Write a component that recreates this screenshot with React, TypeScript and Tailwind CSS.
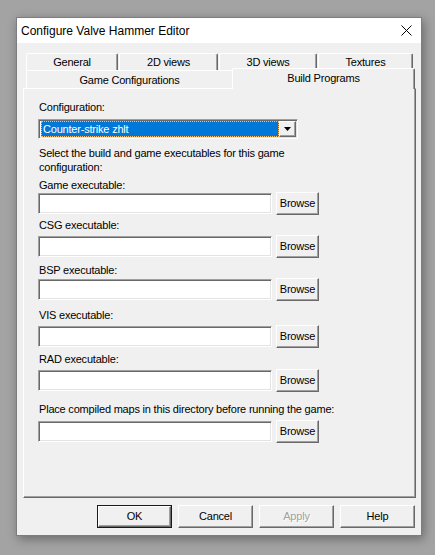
import React from "react";

const FONT = { fontFamily: '"Liberation Sans", Arial, sans-serif' };

function Raised({ children, className = "" }: { children?: React.ReactNode; className?: string }) {
  return (
    <div
      className={
        "flex items-center justify-center bg-[#f0f0f0] border border-t-white border-l-white border-r-[#696969] border-b-[#696969] shadow-[inset_-1px_-1px_0_#a0a0a0] " +
        className
      }
    >
      {children}
    </div>
  );
}

function Field({ label, labelMt, rowMt }: { label: string; labelMt: string; rowMt: string }) {
  return (
    <>
      <div className={"h-[14px] leading-[14px] ml-px " + labelMt}>{label}</div>
      <div className={"flex items-center h-[23px] " + rowMt}>
        <div className="w-[234px] h-[21px] bg-white border border-t-[#a0a0a0] border-l-[#a0a0a0] border-r-white border-b-white shadow-[inset_1px_1px_0_#696969,inset_-1px_-1px_0_#e3e3e3]" />
        <Raised className="ml-[4px] w-[43px] h-[23px]">Browse</Raised>
      </div>
    </>
  );
}

function BackTab({ label, w }: { label: string; w: string }) {
  return (
    <div
      className={
        "h-[17px] flex items-start justify-center pt-[1px] leading-[14px] bg-[#f0f0f0] border-t border-l border-r border-t-white border-l-white border-r-[#696969] shadow-[inset_-1px_0_0_#a0a0a0] rounded-tl-[2px] rounded-tr-[2px] " +
        w
      }
    >
      {label}
    </div>
  );
}

export default function App() {
  return (
    <div className="w-[435px] h-[555px] bg-[#a3a3a3] pt-[17px] pl-[16px] overflow-hidden" style={FONT}>
      <div className="w-[406px] h-[519px] border border-[#7d7d7d] bg-[#f0f0f0] flex flex-col shadow-[2px_3px_10px_rgba(0,0,0,0.35)]">
        {/* Title bar */}
        <div className="h-[25px] bg-white flex items-center pl-[4px] pr-[9px] shrink-0">
          <span className="text-[12px] text-black">Configure Valve Hammer Editor</span>
          <svg className="ml-auto" width="11" height="11" viewBox="0 0 11 11">
            <path d="M0.5 0.5 L10.5 10.5 M10.5 0.5 L0.5 10.5" stroke="#000" strokeWidth="1" />
          </svg>
        </div>
        {/* Body */}
        <div className="flex-1 pt-[10px] pl-[6px] pr-[5px] text-[11px] tracking-[-0.2px] text-black">
          {/* Tabs */}
          <div className="pl-[3px]">
            <div className="flex gap-[1px] h-[17px]">
              <BackTab label="General" w="w-[92px]" />
              <BackTab label="2D views" w="w-[99px]" />
              <BackTab label="3D views" w="w-[98px]" />
              <BackTab label="Textures" w="w-[95px]" />
            </div>
            <div className="flex items-start h-[20px] mt-[-2px]">
              <div className="mt-[2px] w-[206px] h-[18px] flex items-start justify-center pt-[2px] leading-[14px] bg-[#f0f0f0] border-t border-l border-t-white border-l-white rounded-tl-[2px]">
                Game Configurations
              </div>
              <div className="relative z-10 w-[183px] h-[21px] flex items-start justify-center pt-[2px] leading-[14px] bg-[#f0f0f0] border-t border-l border-r border-t-white border-l-white border-r-[#696969] shadow-[inset_-1px_0_0_#a0a0a0] rounded-tl-[2px] rounded-tr-[2px]">
                Build Programs
              </div>
            </div>
          </div>
          {/* Panel */}
          <div className="w-[393px] h-[410px] border border-t-white border-l-white border-r-[#696969] border-b-[#696969] shadow-[inset_-1px_-1px_0_#a0a0a0] pl-[14px] flex flex-col items-start">
            <div className="h-[14px] leading-[14px] ml-px mt-[11px]">Configuration:</div>
            <div className="mt-[5px] w-[260px] h-[20px] bg-white border border-t-[#a0a0a0] border-l-[#a0a0a0] border-r-white border-b-white shadow-[inset_1px_1px_0_#696969,inset_-1px_-1px_0_#e3e3e3] flex items-center pl-[2px] pr-[1px]">
              <div className="flex-1 h-[16px] bg-[#0078d7] text-white leading-[16px] pl-[2px] outline-dotted outline-1 outline-offset-[-1px] outline-[#f8c070]">
                Counter-strike zhlt
              </div>
              <Raised className="w-[17px] h-[16px]">
                <svg width="7" height="4" viewBox="0 0 7 4">
                  <path d="M0 0 H7 L3.5 4 Z" fill="#000" />
                </svg>
              </Raised>
            </div>
            <div className="mt-[7px] ml-px leading-[14px] w-[275px]">
              Select the build and game executables for this game configuration:
            </div>
            <Field label="Game executable:" labelMt="mt-[4px]" rowMt="mt-0" />
            <Field label="CSG executable:" labelMt="mt-[3px]" rowMt="mt-[3px]" />
            <Field label="BSP executable:" labelMt="mt-[5px]" rowMt="mt-[1px]" />
            <Field label="VIS executable:" labelMt="mt-[7px]" rowMt="mt-[3px]" />
            <Field label="RAD executable:" labelMt="mt-[4px]" rowMt="mt-[3px]" />
            <Field label="Place compiled maps in this directory before running the game:" labelMt="mt-[10px]" rowMt="mt-[4px]" />
          </div>
          {/* Buttons */}
          <div className="flex justify-end gap-[6px] mt-[7px] pr-[1px]">
            <div className="w-[75px] h-[23px] border border-[#1a1a1a] flex">
              <Raised className="flex-1">OK</Raised>
            </div>
            <Raised className="w-[75px] h-[23px]">Cancel</Raised>
            <Raised className="w-[75px] h-[23px] text-[#a0a0a0]">
              <span className="[text-shadow:1px_1px_0_#fff]">Apply</span>
            </Raised>
            <Raised className="w-[75px] h-[23px]">Help</Raised>
          </div>
        </div>
      </div>
    </div>
  );
}
